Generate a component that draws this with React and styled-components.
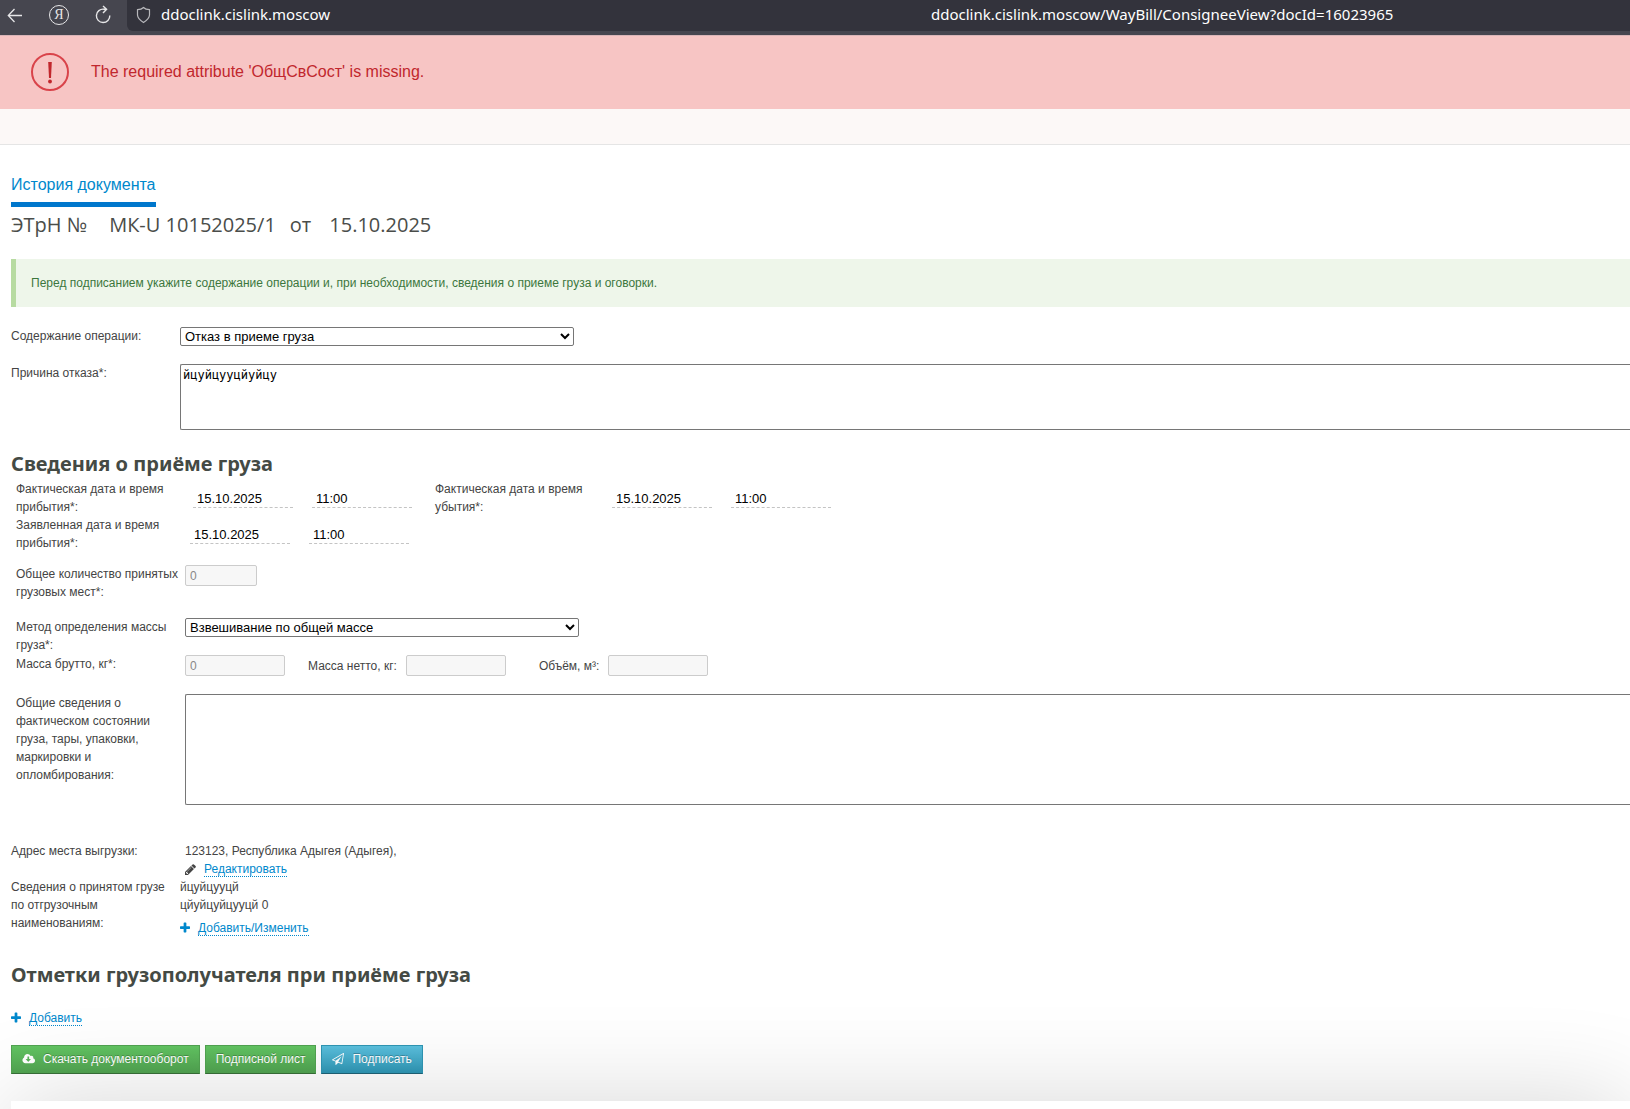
import React from "react";
import styled, { createGlobalStyle } from "styled-components";

const sans = `"Liberation Sans", Arial, sans-serif`;
const display = `"Open Sans", "Noto Sans", sans-serif`;

const GlobalStyle = createGlobalStyle`
  * { box-sizing: border-box; }
  body {
    margin: 0;
    background: #fff;
    color: #444;
    font: 12px/18px ${sans};
  }
`;

const Page = styled.div`
  height: 100vh;
  display: flex;
  flex-direction: column;
  overflow: hidden;

  & > * { flex-shrink: 0; }
`;

/* ---------- browser bar ---------- */
const BrowserBar = styled.header`
  display: flex;
  height: 35px;
  background: #46464f;
  color: #fff;
`;

const NavButtons = styled.nav`
  display: flex;
  flex: 0 0 127px;
  gap: 24px;
  padding: 5px 0 0 5px;
`;

const NavButton = styled.button`
  display: block;
  width: 20px;
  height: 20px;
  padding: 0;
  border: 0;
  background: none;
  color: #e6e6e8;
  font: 14px/20px "Liberation Serif", serif;
`;

const RoundButton = styled(NavButton)`
  border: 1px solid #e6e6e8;
  border-radius: 50%;
  line-height: 18px;
`;

const AddressBar = styled.div`
  display: flex;
  flex: 1;
  height: 31px;
  padding: 0 0 2px 9px;
  border-radius: 0 0 0 6px;
  background: #33333c;
  font: 15px/29px "Noto Sans", sans-serif;
  white-space: nowrap;
`;

const Host = styled.div`
  display: flex;
  flex: 0 0 795px;
  align-items: center;
  gap: 10px;
`;

const Address = styled.div`
  flex: 1;
`;

/* ---------- notices ---------- */
const ErrorBanner = styled.div`
  display: flex;
  align-items: center;
  gap: 21px;
  height: 74px;
  padding: 0 0 2px 30px;
  border-top: 1px solid #d9b5b8;
  background: #f7c5c4;
  color: #c1272d;
  font-size: 16px;
`;

const Strip = styled.div`
  height: 36px;
  border-bottom: 1px solid #e5e5e5;
  background: #fcf8f7;
`;

const Notice = styled.p`
  margin: 0 0 20px;
  padding: 15px;
  border-left: 5px solid #b7dba1;
  background: #eef6ea;
  color: #3c763d;
`;

/* ---------- document ---------- */
const Main = styled.main`
  padding: 30px 0 27px 11px;
`;

const Tab = styled.a`
  display: inline-block;
  height: 32px;
  padding-top: 1px;
  border-bottom: 5px solid #0077cc;
  color: #0088cc;
  font-size: 16px;
  text-decoration: none;
`;

const DocTitle = styled.h1`
  display: flex;
  margin: 0;
  height: 52px;
  color: #4a4d4a;
  font: 400 20px/36px ${display};
`;

const TitlePart = styled.span`
  margin-right: ${(p) => p.$gap}px;
`;

const SectionTitle = styled.h2`
  margin: 0 0 ${(p) => p.$after || 0}px;
  color: #444a44;
  font: 700 20px/33px "Noto Sans", sans-serif;
`;

const Row = styled.div`
  display: flex;
  align-items: flex-start;
  padding-left: ${(p) => (p.$inset ? 5 : 0)}px;
  margin-bottom: ${(p) => p.$after || 0}px;
`;

const Label = styled.label`
  flex: 0 0 169px;
  padding-right: ${(p) => (p.$tight ? 0 : 8)}px;
`;

const Caption = styled.div`
  flex: 0 0 ${(p) => p.$width}px;
`;

const PeriodLabel = styled(Label)`
  flex-basis: ${(p) => p.$width}px;
  padding-right: 20px;
`;

const InlineLabel = styled.label`
  padding-top: 2px;
  margin: 0 9px 0 ${(p) => p.$before}px;
`;

const Select = styled.select`
  width: 394px;
  height: 19px;
  padding: 0;
  border: 1px solid #767676;
  border-radius: 2px;
  background: #fff;
  color: #000;
  font: 13px ${sans};
`;

const TextArea = styled.textarea`
  flex: 1;
  display: block;
  height: ${(p) => p.$height}px;
  padding: 2px;
  border: 1px solid #767676;
  border-right: 0;
  border-radius: 2px 0 0 2px;
  background: #fff;
  color: #000;
  font: 12px/17px "DejaVu Sans Mono", monospace;
  resize: none;
`;

const LineInput = styled.input`
  width: 100px;
  height: 28px;
  margin-right: ${(p) => p.$after || 0}px;
  padding: 10px 4px 0;
  border: 0;
  border-bottom: 1px dashed #c4c4c4;
  background: none;
  color: #000;
  font: 13px ${sans};
`;

const BoxInput = styled.input`
  width: ${(p) => p.$width}px;
  height: 21px;
  padding: 0 4px;
  border: 1px solid #ccc;
  border-radius: 2px;
  background: #f7f7f7;
  color: #888;
  font: 12px ${sans};
`;

const Icon = styled.svg`
  display: block;
  flex: none;
  fill: currentColor;
`;

const Action = styled.div`
  display: flex;
  align-items: center;
  gap: 8px;
  height: 18px;
  color: ${(p) => (p.$dark ? "#444" : "#0088cc")};
`;

const DottedLink = styled.a`
  padding-top: 2px;
  border-bottom: 1px dotted #0088cc;
  color: #0088cc;
  line-height: 13px;
  text-decoration: none;
`;

const Received = styled.div`
  & > ${Action} { margin-top: 5px; }
`;

const Buttons = styled.div`
  display: flex;
  gap: 5px;
  margin-top: 18px;
`;

const Button = styled.button`
  display: flex;
  align-items: center;
  gap: 8px;
  height: 29px;
  padding: 0 10px 2px;
  border: 1px solid ${(p) => (p.$blue ? "#2f96b4" : "#51a351")};
  border-bottom-color: ${(p) => (p.$blue ? "#1f6377" : "#387038")};
  background: ${(p) =>
    p.$blue
      ? "linear-gradient(#5bc0de, #2f96b4)"
      : "linear-gradient(#62c462, #51a351)"};
  color: #fff;
  font: 12px/18px ${sans};
  text-shadow: 0 -1px 0 rgba(0, 0, 0, 0.25);
  white-space: nowrap;
`;

const Footer = styled.footer`
  height: 300px;
  margin-left: 11px;
  background: #fff;
  box-shadow: 0 0 100px rgba(0, 0, 0, 0.16);
`;

/* ---------- icons ---------- */
const PlusIcon = () => (
  <Icon width="10" height="12" viewBox="192 128 1408 1536" aria-hidden="true">
    <path d="M1600 736v192q0 40-28 68t-68 28h-416v416q0 40-28 68t-68 28h-192q-40 0-68-28t-28-68v-416h-416q-40 0-68-28t-28-68v-192q0-40 28-68t68-28h416v-416q0-40 28-68t68-28h192q40 0 68 28t28 68v416h416q40 0 68 28t28 68z" />
  </Icon>
);

const PencilIcon = () => (
  <Icon width="11" height="11" viewBox="128 128 1536 1536" aria-hidden="true">
    <path d="M491 1536l91-91-235-235-91 91v107h128v128h107zM1014 608q0-22-22-22-10 0-17 7l-542 542q-7 7-7 17 0 22 22 22 10 0 17-7l542-542q7-7 7-17zM960 416l416 416-832 832h-416v-416zM1643 512q0 53-37 90l-166 166-416-416 166-165q36-38 90-38 53 0 91 38l235 234q37 39 37 91z" />
  </Icon>
);

const CloudIcon = () => (
  <Icon width="13" height="12" viewBox="0 128 1984 1536" aria-hidden="true">
    <path d="M1344 928q0-14-9-23t-23-9h-224v-352q0-13-9.5-22.5t-22.5-9.5h-192q-13 0-22.5 9.5t-9.5 22.5v352h-224q-13 0-22.5 9.5t-9.5 22.5q0 14 9 23l352 352q9 9 23 9t23-9l351-351q10-12 10-24zm640 224q0 159-112.5 271.5t-271.5 112.5h-1088q-185 0-316.5-131.5t-131.5-316.5q0-130 70-240t188-165q-2-30-2-43 0-212 150-362t362-150q156 0 285.5 87t188.5 231q71-62 166-62 106 0 181 75t75 181q0 76-41 138 130 31 213.5 135.5t83.5 238.5z" />
  </Icon>
);

const PlaneIcon = () => (
  <Icon width="12" height="12" viewBox="0 0 1792 1792" aria-hidden="true">
    <path d="M1764 11q33 24 27 64l-256 1536q-5 29-32 45-14 8-31 8-11 0-24-5l-527-215-298 327q-18 21-47 21-14 0-23-4-19-7-30-23.5t-11-36.5v-452l-472-193q-37-14-40-55-3-39 32-59l1664-960q35-21 68 2zm-342 1499l221-1323-1434 827 336 137 863-639-478 797z" />
  </Icon>
);

const WarningIcon = () => (
  <Icon width="40" height="40" viewBox="0 0 40 40" aria-hidden="true">
    <circle cx="20" cy="20" r="18" fill="none" stroke="#d9434a" strokeWidth="2" />
    <path d="M18.200 10h3.600l-.8 16h-2z" />
    <circle cx="20" cy="29.500" r="1.900" />
  </Icon>
);

const Stroke = styled(Icon)`
  fill: none;
  stroke: currentColor;
`;

const BackIcon = () => (
  <Stroke width="20" height="20" viewBox="0 0 20 20" strokeWidth="1.3" aria-hidden="true">
    <path d="M17 10.500H3.500M9.500 4L3.300 10.500L9.500 17" />
  </Stroke>
);

const ReloadIcon = () => (
  <Stroke width="20" height="20" viewBox="0 0 20 20" strokeWidth="1.4" aria-hidden="true">
    <path d="M16.800 10.500A6.700 6.700 0 1 1 11 4.200H13M10 1L13.600 4.200L10 8" />
  </Stroke>
);

const ShieldIcon = () => (
  <Stroke width="15" height="18" viewBox="0 0 15 18" strokeWidth="1.2" color="#b8b8bc" aria-hidden="true">
    <path d="M7.500 1.500Q9.500 3.500 13.500 3.700V9Q13.300 13 7.500 16.500Q1.700 13 1.500 9V3.700Q5.500 3.500 7.500 1.500Z" />
  </Stroke>
);

/* ---------- composed parts ---------- */
const DateTime = ({ name, title }) => (
  <>
    <LineInput id={name} aria-label={title + ": дата"} defaultValue="15.10.2025" $after={19} />
    <LineInput aria-label={title + ": время"} defaultValue="11:00" />
  </>
);

const ActionLink = ({ icon, dark, children }) => (
  <Action $dark={dark}>
    {icon}
    <DottedLink href="#">{children}</DottedLink>
  </Action>
);

export default function App() {
  return (
    <Page>
      <GlobalStyle />
      <BrowserBar>
        <NavButtons>
          <NavButton aria-label="Назад"><BackIcon /></NavButton>
          <RoundButton>Я</RoundButton>
          <NavButton aria-label="Обновить"><ReloadIcon /></NavButton>
        </NavButtons>
        <AddressBar>
          <Host><ShieldIcon />ddoclink.cislink.moscow</Host>
          <Address>ddoclink.cislink.moscow/WayBill/ConsigneeView?docId=16023965</Address>
        </AddressBar>
      </BrowserBar>
      <ErrorBanner role="alert">
        <WarningIcon />
        The required attribute 'ОбщСвСост' is missing.
      </ErrorBanner>
      <Strip />
      <Main>
        <Tab href="#">История документа</Tab>
        <DocTitle>
          <TitlePart $gap={22}>ЭТрН №</TitlePart>
          <TitlePart $gap={14}>МК-U 10152025/1</TitlePart>
          <TitlePart $gap={18}>от</TitlePart>
          <TitlePart $gap={0}>15.10.2025</TitlePart>
        </DocTitle>
        <Notice>
          Перед подписанием укажите содержание операции и, при необходимости, сведения о приеме груза и оговорки.
        </Notice>
        <Row $after={18}>
          <Label htmlFor="operation">Содержание операции:</Label>
          <Select id="operation"><option>Отказ в приеме груза</option></Select>
        </Row>
        <Row $after={17}>
          <Label htmlFor="reason">Причина отказа*:</Label>
          <TextArea id="reason" $height={66} defaultValue="йцуйцууцйуйцу" />
        </Row>

        <SectionTitle>Сведения о приёме груза</SectionTitle>
        <Row $inset>
          <PeriodLabel htmlFor="arrived" $width={177}>Фактическая дата и время прибытия*:</PeriodLabel>
          <DateTime name="arrived" title="Прибытие" />
          <Caption $width={23} />
          <PeriodLabel htmlFor="left" $width={177}>Фактическая дата и время убытия*:</PeriodLabel>
          <DateTime name="left" title="Убытие" />
        </Row>
        <Row $inset $after={13}>
          <PeriodLabel htmlFor="declared" $width={174}>Заявленная дата и время прибытия*:</PeriodLabel>
          <DateTime name="declared" title="Заявленное прибытие" />
        </Row>
        <Row $inset $after={17}>
          <Label htmlFor="places" $tight>Общее количество принятых грузовых мест*:</Label>
          <BoxInput id="places" $width={72} defaultValue="0" disabled />
        </Row>
        <Row $inset $after={1}>
          <Label htmlFor="method">Метод определения массы груза*:</Label>
          <Select id="method"><option>Взвешивание по общей массе</option></Select>
        </Row>
        <Row $inset $after={18}>
          <Label htmlFor="gross">Масса брутто, кг*:</Label>
          <BoxInput id="gross" $width={100} defaultValue="0" disabled />
          <InlineLabel htmlFor="net" $before={23}>Масса нетто, кг:</InlineLabel>
          <BoxInput id="net" $width={100} disabled />
          <InlineLabel htmlFor="volume" $before={33}>Объём, м³:</InlineLabel>
          <BoxInput id="volume" $width={100} disabled />
        </Row>
        <Row $inset $after={37}>
          <Label htmlFor="state">
            Общие сведения о фактическом состоянии груза, тары, упаковки, маркировки и опломбирования:
          </Label>
          <TextArea id="state" $height={111} />
        </Row>

        <Row>
          <Caption $width={174}>Адрес места выгрузки:</Caption>
          <div>
            <div>123123, Республика Адыгея (Адыгея),</div>
            <ActionLink dark icon={<PencilIcon />}>Редактировать</ActionLink>
          </div>
        </Row>
        <Row $after={21}>
          <Label as="div">Сведения о принятом грузе по отгрузочным наименованиям:</Label>
          <Received>
            <div>йцуйцууцй</div>
            <div>цйуйцуйцууцй 0</div>
            <ActionLink icon={<PlusIcon />}>Добавить/Изменить</ActionLink>
          </Received>
        </Row>

        <SectionTitle $after={18}>Отметки грузополучателя при приёме груза</SectionTitle>
        <ActionLink icon={<PlusIcon />}>Добавить</ActionLink>
        <Buttons>
          <Button><CloudIcon />Скачать документооборот</Button>
          <Button>Подписной лист</Button>
          <Button $blue><PlaneIcon />Подписать</Button>
        </Buttons>
      </Main>
      <Footer />
    </Page>
  );
}
